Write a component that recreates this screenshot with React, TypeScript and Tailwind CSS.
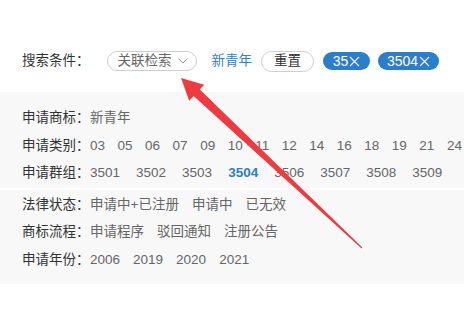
import React from "react";

const font = { fontFamily: '"Liberation Sans", "Noto Sans CJK SC", sans-serif' };

function X() {
  return (
    <svg width="11" height="11" viewBox="0 0 11 11" className="ml-[1px]">
      <path d="M1 1 L10 10 M10 1 L1 10" stroke="white" strokeWidth="1.1" fill="none" />
    </svg>
  );
}

export default function App() {
  const classes = ["03", "05", "06", "07", "09", "10", "11", "12", "14", "16", "18", "19", "21", "24"];
  const groups = ["3501", "3502", "3503", "3504", "3506", "3507", "3508", "3509"];
  return (
    <div className="relative w-[464px] h-[314px] bg-white overflow-hidden text-[13.5px] leading-none" style={font}>
      <div className="pt-[50px] pl-[22px] flex items-center h-[72px]">
        <span className="text-[#333]">搜索条件：</span>
        <div className="ml-[17px] w-[90px] h-[20px] rounded-full border border-[#cfcfcf] flex items-center pl-[10px] text-[#666]">
          <span>关联检索</span>
          <svg width="10" height="6" viewBox="0 0 10 6" className="ml-[6px]">
            <path d="M0.5 0.5 L5 5 L9.5 0.5" stroke="#999" strokeWidth="1" fill="none" />
          </svg>
        </div>
        <span className="ml-[15px] text-[#3a7fc1]">新青年</span>
        <div className="ml-[9px] w-[53px] h-[21px] rounded-full border border-[#cfcfcf] flex items-center justify-center text-[#333]">重置</div>
        <div className="ml-[9px] w-[47px] h-[18px] rounded-full bg-[#2c7dcc] text-white text-[14px] flex items-center justify-center">
          <span>35</span>
          <X />
        </div>
        <div className="ml-[8px] w-[61px] h-[18px] rounded-full bg-[#2c7dcc] text-white text-[14px] flex items-center justify-center">
          <span>3504</span>
          <X />
        </div>
      </div>

      <div className="mt-[20px] bg-[#f8f8f9]">
        <div className="pt-[12px] pl-[22px] pb-[1px]">
          <div className="h-[27.5px] flex items-center">
            <span className="w-[68px] text-[#333]">申请商标：</span>
            <span className="text-[#666]">新青年</span>
          </div>
          <div className="h-[27.5px] flex items-center">
            <span className="w-[68px] text-[#333] shrink-0">申请类别：</span>
            <div className="flex gap-[12.5px] text-[#666] whitespace-nowrap">
              {classes.map((c) => (
                <span key={c}>{c}</span>
              ))}
            </div>
          </div>
          <div className="h-[27.5px] flex items-center">
            <span className="w-[68px] text-[#333] shrink-0">申请群组：</span>
            <div className="flex gap-[16px] text-[#666] whitespace-nowrap">
              {groups.map((g) => (
                <span key={g} className={g === "3504" ? "text-[#2f7fc6] font-bold" : ""}>{g}</span>
              ))}
            </div>
          </div>
        </div>
        <div className="h-[2px] bg-[#fdfdfd]" />
        <div className="pt-[1px] pl-[22px] pb-[11px]">
          <div className="h-[27.5px] flex items-center">
            <span className="w-[68px] text-[#333]">法律状态：</span>
            <div className="flex gap-[13px] text-[#666]">
              <span>申请中+已注册</span>
              <span>申请中</span>
              <span>已无效</span>
            </div>
          </div>
          <div className="h-[27.5px] flex items-center">
            <span className="w-[68px] text-[#333]">商标流程：</span>
            <div className="flex gap-[13px] text-[#666]">
              <span>申请程序</span>
              <span>驳回通知</span>
              <span>注册公告</span>
            </div>
          </div>
          <div className="h-[27.5px] flex items-center">
            <span className="w-[68px] text-[#333]">申请年份：</span>
            <div className="flex gap-[13px] text-[#666]">
              <span>2006</span>
              <span>2019</span>
              <span>2020</span>
              <span>2021</span>
            </div>
          </div>
        </div>
      </div>

      <svg className="absolute left-0 top-0 pointer-events-none" width="464" height="314" viewBox="0 0 464 314">
        <polygon
          points="181,78 204.2,84.7 199.8,89.4 362.4,247.6 361.6,248.4 193.6,96 189.2,100.7"
          fill="#ef3b3f"
        />
      </svg>
    </div>
  );
}
